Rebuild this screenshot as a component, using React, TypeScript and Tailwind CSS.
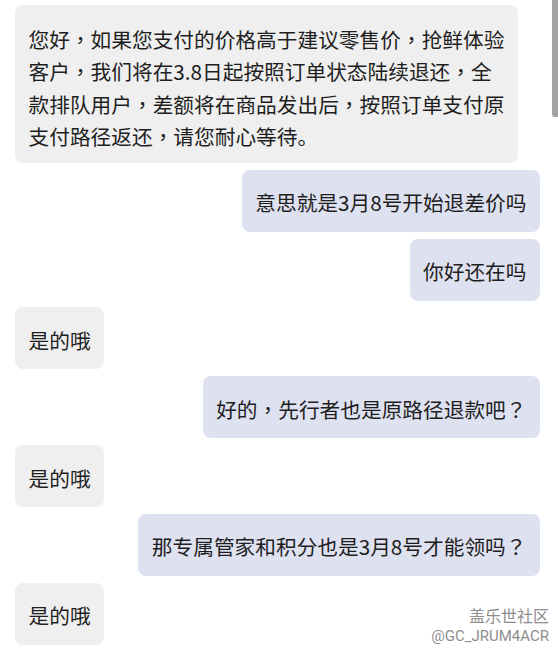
import React from "react";

type Msg = { side: "left" | "right"; lines: string[] };

const messages: Msg[] = [
  { side: "right", lines: ["意思就是3月8号开始退差价吗"] },
  { side: "right", lines: ["你好还在吗"] },
  { side: "left", lines: ["是的哦"] },
  { side: "right", lines: ["好的，先行者也是原路径退款吧？"] },
  { side: "left", lines: ["是的哦"] },
  { side: "right", lines: ["那专属管家和积分也是3月8号才能领吗？"] },
  { side: "left", lines: ["是的哦"] },
];

// the phone font centres full-width commas and question marks
function Line({ text }: { text: string }) {
  const parts = text.split(/([，？])/);
  return (
    <div>
      {parts.map((p, i) =>
        p === "，" || p === "？" ? (
          <span key={i} style={{ fontFamily: '"Noto Sans CJK TC", sans-serif' }}>
            {p}
          </span>
        ) : (
          <React.Fragment key={i}>{p}</React.Fragment>
        )
      )}
    </div>
  );
}

function Bubble({ side, lines }: Msg) {
  const color = side === "left" ? "bg-[#efefef] self-start" : "bg-[#dee1f0] self-end";
  return (
    <div
      className={`${color} rounded-[8px] px-[13.5px] pt-[16.5px] pb-[13px] text-[20.7px] leading-[32.5px] text-[#1e1e1e] whitespace-nowrap`}
    >
      {lines.map((l, i) => (
        <Line key={i} text={l} />
      ))}
    </div>
  );
}

export default function App() {
  return (
    <main
      className="relative w-[558px] h-[650px] overflow-hidden bg-white"
      style={{ fontFamily: '"Noto Sans CJK SC", "Noto Sans", sans-serif' }}
    >
      <div className="flex flex-col gap-[6.83px] pl-[15px] pr-[18px] pt-[5px]">
        <div className="self-start rounded-[8px] bg-[#efefef] px-[13.5px] pt-[17.5px] pb-[10.5px] text-[20.7px] leading-[32.5px] text-[#1e1e1e] whitespace-nowrap">
          <Line text="您好，如果您支付的价格高于建议零售价，抢鲜体验" />
          <Line text="客户，我们将在3.8日起按照订单状态陆续退还，全" />
          <Line text="款排队用户，差额将在商品发出后，按照订单支付原" />
          <Line text="支付路径返还，请您耐心等待。" />
        </div>
        {messages.map((m, i) => (
          <Bubble key={i} {...m} />
        ))}
      </div>

      {/* scrollbar */}
      <div className="absolute right-0 top-0 h-[117px] w-[6px] rounded-bl-[3px] bg-[#a3a3a3]" />

      {/* watermark */}
      <div className="absolute right-[9px] top-[604px] flex flex-col items-end text-[#8e8e8e] [text-shadow:0_0_1px_#ffffff]">
        <span className="text-[16px] leading-[22px]">盖乐世社区</span>
        <span
          className="text-[15px] leading-[20px]"
          style={{ fontFamily: "Roboto, 'Noto Sans', sans-serif" }}
        >
          @GC_JRUM4ACR
        </span>
      </div>
    </main>
  );
}
